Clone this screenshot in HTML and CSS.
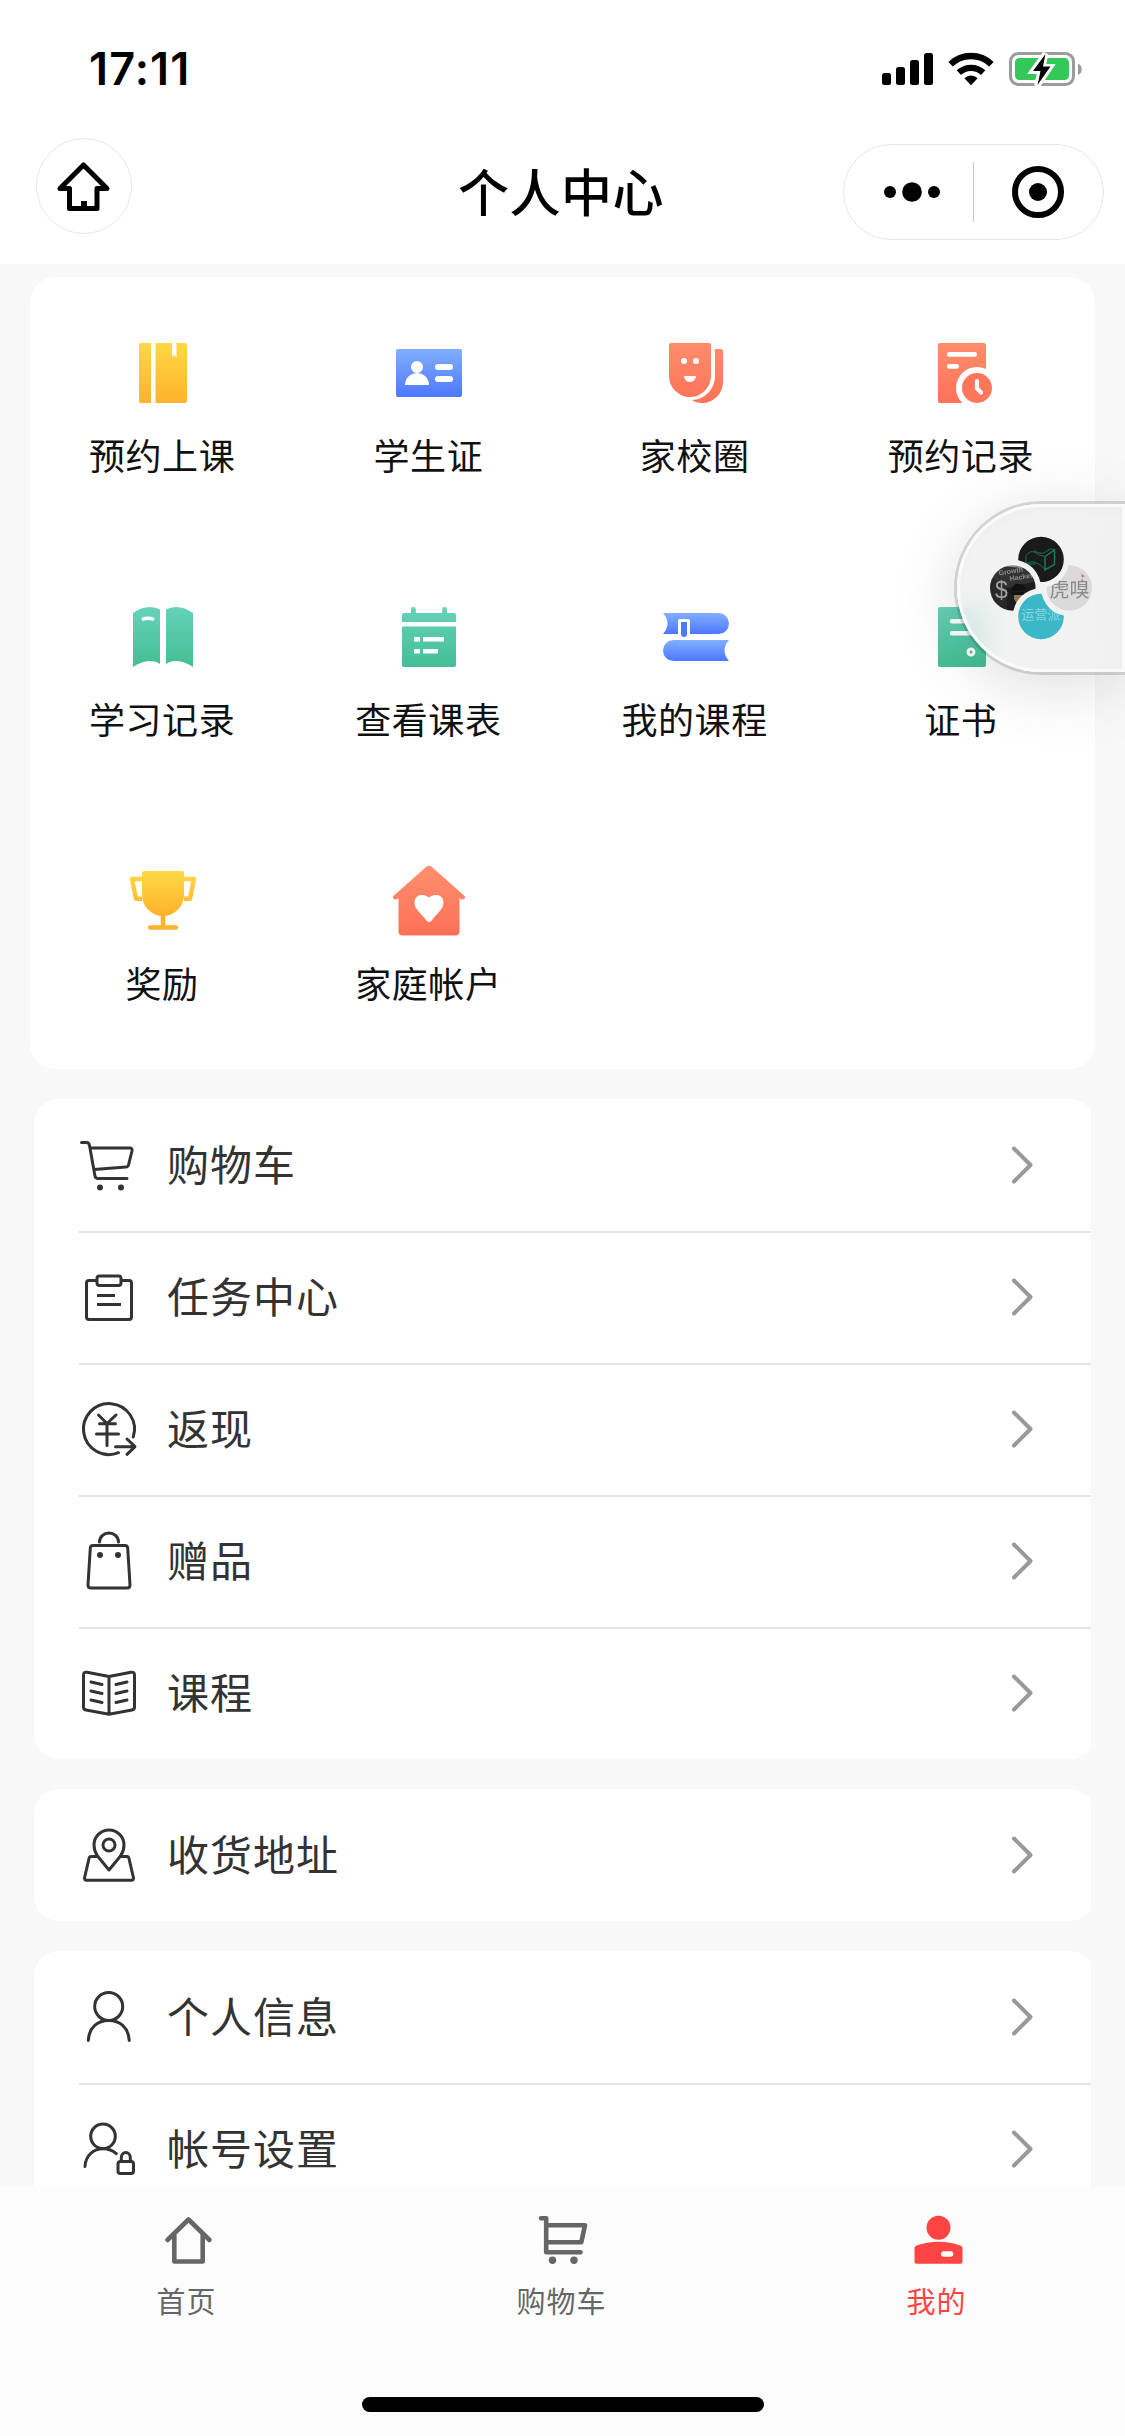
FILE: index.html
```html
<!DOCTYPE html>
<html lang="zh-CN">
<head>
<meta charset="utf-8">
<title>个人中心</title>
<link rel="stylesheet" href="styles.css">
</head>
<body>
<svg class="defs" width="0" height="0" aria-hidden="true">
  <defs>
    <linearGradient id="yellow" gradientUnits="userSpaceOnUse" x1="0" y1="-30" x2="0" y2="30"><stop offset="0" stop-color="#ffd844"/><stop offset="1" stop-color="#ffb22c"/></linearGradient>
    <linearGradient id="cup" gradientUnits="userSpaceOnUse" x1="0" y1="-30" x2="0" y2="15"><stop offset="0" stop-color="#ffd844"/><stop offset="1" stop-color="#ffb22c"/></linearGradient>
    <linearGradient id="blue" gradientUnits="userSpaceOnUse" x1="0" y1="-24" x2="0" y2="24"><stop offset="0" stop-color="#82afff"/><stop offset="1" stop-color="#4c78ff"/></linearGradient>
    <linearGradient id="blueTop" gradientUnits="userSpaceOnUse" x1="0" y1="-24" x2="0" y2="-3"><stop offset="0" stop-color="#82afff"/><stop offset="1" stop-color="#4c78ff"/></linearGradient>
    <linearGradient id="blueBottom" gradientUnits="userSpaceOnUse" x1="0" y1="3" x2="0" y2="24"><stop offset="0" stop-color="#82afff"/><stop offset="1" stop-color="#4c78ff"/></linearGradient>
    <linearGradient id="coral" gradientUnits="userSpaceOnUse" x1="0" y1="-30" x2="0" y2="30"><stop offset="0" stop-color="#ff8d6c"/><stop offset="1" stop-color="#ff7259"/></linearGradient>
    <linearGradient id="green" gradientUnits="userSpaceOnUse" x1="0" y1="-30" x2="0" y2="30"><stop offset="0" stop-color="#66d2b8"/><stop offset="1" stop-color="#43be95"/></linearGradient>
    <symbol id="chevron" viewBox="0 0 24 40"><path d="M4 3.5 20.5 20 4 36.5" fill="none" stroke="#999" stroke-width="4" stroke-linecap="round" stroke-linejoin="round"/></symbol>
  </defs>
</svg>

<header class="header">
  <div class="status">
    <span class="time">17:11</span>
    <svg class="status-icons" width="204" height="40" viewBox="880 49 204 40">
      <g><rect x="882" y="73" width="9" height="12" rx="2.5"/><rect x="896" y="67" width="9" height="18" rx="2.5"/><rect x="910" y="60" width="9" height="25" rx="2.5"/><rect x="924" y="53" width="9" height="32" rx="2.5"/></g>
      <g fill="none" stroke="#000" stroke-width="6.4"><path d="M950.6 64.2a29.5 29.5 0 0 1 40.8 0"/><path d="M958.8 72.6a18 18 0 0 1 24.4 0"/></g>
      <path d="M971 85.2l-6.6-7a9.5 9.5 0 0 1 13.2 0z"/>
      <rect x="1010.5" y="53.5" width="63" height="31" rx="8" fill="none" stroke="#9b9b9b" stroke-width="3"/>
      <path d="M1078 63.5a6.3 6.3 0 0 1 0 11.5z" fill="#9b9b9b"/>
      <rect x="1015" y="58" width="54" height="22" rx="4.5" fill="#34c759"/>
      <path d="M1045.5 53.5l-12.5 17.500h7.500l-3.500 15 13-19h-7.500z" stroke="#fff" stroke-width="6"/>
      <path d="M1045.500 54l-12.500 17h7.500l-3 14 13-18.500h-7.500z"/>
    </svg>
  </div>
  <div class="nav">
    <div class="home-btn">
      <svg width="60" height="60" viewBox="54 156 60 60"><path d="M83.500 165 L107 188.500H97V208.500H69.500V188.500H60Z" fill="none" stroke="#000" stroke-width="5" stroke-linejoin="round"/><path d="M81 201h6v7h-6z"/></svg>
    </div>
    <h1 class="title">个人中心</h1>
    <div class="capsule">
      <svg width="56" height="24" viewBox="-28 -12 56 24"><circle cx="-22" r="6"/><circle r="9.800"/><circle cx="22" r="6"/></svg>
      <span class="capsule-line"></span>
      <svg width="56" height="56" viewBox="-28 -28 56 56"><circle r="23" fill="none" stroke="#000" stroke-width="6"/><circle r="9"/></svg>
    </div>
  </div>
</header>

<main class="content">
  <section class="grid">
    <div class="cell">
      <svg class="gi" viewBox="-39 -39 78 78"><g fill="url(#yellow)"><path d="M-12-30V30h-10a2 2 0 0 1-2-2v-56a2 2 0 0 1 2-2z"/><path d="M-7.500-30H9V-15.300L11.300-18 13.500-15.300V-30H22a2 2 0 0 1 2 2v56a2 2 0 0 1-2 2H-7.500z"/></g></svg>
      <span>预约上课</span>
    </div>
    <div class="cell">
      <svg class="gi" viewBox="-39 -39 78 78"><rect x="-33" y="-24" width="66" height="48" rx="2" fill="url(#blue)"/><g fill="#fff"><circle cx="-12" cy="-6" r="6"/><path d="M-24 12a12 12 0 0 1 24 0z"/><rect x="6" y="-9" width="18" height="6" rx="3"/><rect x="6" y="3" width="18" height="6" rx="3"/></g></svg>
      <span>学生证</span>
    </div>
    <div class="cell">
      <svg class="gi" viewBox="-39 -39 78 78"><g fill="url(#coral)"><path d="M-25-30H13a2 2 0 0 1 2 2V3a21 21 0 0 1-42 0v-31a2 2 0 0 1 2-2z"/><path d="M19-24h6a2 2 0 0 1 2 2V9a21 21 0 0 1-21 21q-6 0-10-3A24 24 0 0 0 19 3z"/></g><g fill="#fff"><circle cx="-12" cy="-12" r="3"/><circle cy="-12" r="3"/><path d="M-12 3H0a6 6 0 0 1-12 0z"/></g></svg>
      <span>家校圈</span>
    </div>
    <div class="cell">
      <svg class="gi" viewBox="-39 -39 78 78"><rect x="-24" y="-30" width="48" height="60" rx="2" fill="url(#coral)"/><rect x="-15" y="-21" width="30" height="4.700" rx="2.300" fill="#fff"/><rect x="-15" y="-9" width="12" height="4.700" rx="2.300" fill="#fff"/><circle cx="15" cy="15" r="21" fill="#fff"/><circle cx="15" cy="15" r="15" fill="#ff765b"/><path d="M15 8v7.500l4 4" fill="none" stroke="#fff" stroke-width="4.200" stroke-linecap="round" stroke-linejoin="round"/></svg>
      <span>预约记录</span>
    </div>
    <div class="cell">
      <svg class="gi" viewBox="-39 -39 78 78"><g fill="url(#green)"><path d="M-30-24Q-22-30-13-30-7-30-3-27.500V27Q-7 24-13 24-22 24.500-30 30z"/><path d="M30-24Q22-30 13-30 7-30 3-27.500V27Q7 24 13 24 22 24.500 30 30z"/></g><path d="M-21-17.500Q-15-20-9-17.500" fill="none" stroke="#fff" stroke-width="3.400"/></svg>
      <span>学习记录</span>
    </div>
    <div class="cell">
      <svg class="gi" viewBox="-39 -39 78 78"><g fill="url(#green)"><path d="M-27-15v-7a2 2 0 0 1 2-2h7v-3.500a2.400 2.400 0 0 1 4.800 0v3.500h26.400v-3.500a2.400 2.400 0 0 1 4.800 0v3.500h7a2 2 0 0 1 2 2v7z"/><path d="M-27-10.500h54V28a2 2 0 0 1-2 2h-50a2 2 0 0 1-2-2z"/></g><path d="M-15 2.200h6m3 0h21M-15 14.200h6m3 0H9" stroke="#fff" stroke-width="4.500"/></svg>
      <span>查看课表</span>
    </div>
    <div class="cell">
      <svg class="gi" viewBox="-39 -39 78 78"><path d="M-33-24H22.500a10.500 10.500 0 0 1 0 21H-33q9-10.500 0-21z" fill="url(#blueTop)"/><path d="M33 3H-22.500a10.500 10.500 0 0 0 0 21H33q-9-10.500 0-21z" fill="url(#blueBottom)"/><path d="M-18-3v-13.500a1.500 1.500 0 0 1 1.500-1.500h9a1.500 1.500 0 0 1 1.500 1.500V-3z" fill="#fff"/><path d="M-15-15h6V-3a3 3 0 0 1-6 0z" fill="#4c78ff"/></svg>
      <span>我的课程</span>
    </div>
    <div class="cell">
      <svg class="gi" viewBox="-39 -39 78 78"><rect x="-24" y="-30" width="48" height="60" rx="2" fill="url(#green)"/><g fill="none" stroke="#fff"><path d="M-10-15.800h21M-10-3.800h21" stroke-width="4.500" stroke-linecap="round"/><circle cx="9" cy="15" r="3" stroke-width="3"/></g></svg>
      <span>证书</span>
    </div>
    <div class="cell">
      <svg class="gi" viewBox="-39 -39 78 78"><path d="M-19-30h38a2 2 0 0 1 2 2v22a21 21 0 0 1-42 0v-22a2 2 0 0 1 2-2z" fill="url(#cup)"/><path d="M-21-22H-31L-27-2.200h6M21-22H31L27-2.200h-6" fill="none" stroke="url(#cup)" stroke-width="4.400" stroke-linejoin="round"/><path d="M0 14v12M-12.800 26.500h25.600" stroke="#ffb22c" stroke-width="4.600" stroke-linecap="round"/></svg>
      <span>奖励</span>
    </div>
    <div class="cell">
      <svg class="gi" viewBox="-39 -39 78 78"><path d="M-3-34Q0-36.500 3-34L35-5.500q2 2 .5 3.300t-3.500.4l-1.500-1.200V30.500a4 4 0 0 1-4 4h-53a4 4 0 0 1-4-4V-3l-1.500 1.200q-2 1-3.500-.4t.5-3.300z" fill="url(#coral)"/><path d="M0 21Q-2 21-3 19L-12 8.500C-17 2-14-6-7-6-3-6-2-4 0-4S3-6 7-6C14-6 17 2 12 8.500L3 19Q2 21 0 21z" fill="#fff"/></svg>
      <span>家庭帐户</span>
    </div>
  </section>

  <section class="group"><div class="list">
    <div class="row"><svg class="li" viewBox="-33 -33 66 66"><path d="M-27.500-22.500h5q2.500 0 3 3L-14 11q.5 2.500 3 2.500H18M-18-17H21q2.500 0 2 3L19.500 0q-.5 2-2.500 2L-15 4.500"/><circle class="dot" cx="-9" cy="22.500" r="3"/><circle class="dot" cx="12" cy="22.500" r="3"/></svg><div class="line"><span>购物车</span><svg class="chev"><use href="#chevron"/></svg></div></div>
    <div class="row"><svg class="li" viewBox="-33 -33 66 66"><path d="M-13-16.500h-7a2.500 2.500 0 0 0-2.500 2.500V20a2.500 2.500 0 0 0 2.500 2.500h40a2.500 2.500 0 0 0 2.500-2.500V-14a2.500 2.500 0 0 0-2.500-2.500h-7M-12-1.500H6M-12 7.500h24" stroke-linecap="butt"/><rect x="-12" y="-21" width="24" height="9.500" rx="2.500"/></svg><div class="line"><span>任务中心</span><svg class="chev"><use href="#chevron"/></svg></div></div>
    <div class="row"><svg class="li" viewBox="-33 -33 66 66"><path d="M24.200 8A25.500 25.500 0 1 0 9.500 23.700M-10.500-14-2-5.500 7-14M-9.500-5.300H6.500M-12.500 5H9.500M-2-5V16.500M6.500 17.700H25.500M18 10l8 7.700-8 7.600"/></svg><div class="line"><span>返现</span><svg class="chev"><use href="#chevron"/></svg></div></div>
    <div class="row"><svg class="li" viewBox="-33 -33 66 66"><path d="M-16-15.500h32q2.500 0 2.700 2.500L21 24q0 3-3 3h-36q-3 0-3-3L-18.700-13q.2-2.500 2.700-2.500zM-9.500-19a9.500 9 0 0 1 19 0"/><circle class="dot" cx="-9" cy="-6" r="3"/><circle class="dot" cx="9" cy="-6" r="3"/></svg><div class="line"><span>赠品</span><svg class="chev"><use href="#chevron"/></svg></div></div>
    <div class="row"><svg class="li" viewBox="-33 -33 66 66"><path d="M0-16.500-22-20.800q-3.500-.5-3.500 2.800V14q0 2.500 2.500 3L0 21.200 23 17q2.500-.5 2.500-3V-18q0-3.300-3.500-2.800zV21M-18-11-7-8.500M-18-2-7 .5M-18 7-7 9.500M18-11 7-8.500M18-2 7 .5M18 7 7 9.500"/></svg><div class="line"><span>课程</span><svg class="chev"><use href="#chevron"/></svg></div></div>
  </div></section>

  <section class="group"><div class="list">
    <div class="row"><svg class="li" viewBox="-33 -33 66 66"><path d="M0 15-11.500 1Q-15-4-15-10A15 15 0 0 1 15-10Q15-4 11.500 1ZM-11 1.500h-7q-1.500 0-2 2L-24.500 23q0 2 1.500 2.200h46q1.500-.2 1.500-2.200L20 3.500q-.5-2-2-2h-7"/><circle cy="-10" r="6"/></svg><div class="line"><span>收货地址</span><svg class="chev"><use href="#chevron"/></svg></div></div>
  </div></section>

  <section class="group"><div class="list">
    <div class="row"><svg class="li" viewBox="-33 -33 66 66"><ellipse cx="-.3" cy="-10.500" rx="14" ry="14"/><path d="M-20.700 23.500C-20 10-11 3.500-.3 3.500S19.500 10 20.200 23.500"/></svg><div class="line"><span>个人信息</span><svg class="chev"><use href="#chevron"/></svg></div></div>
    <div class="row"><svg class="li" viewBox="-33 -33 66 66"><circle cx="-6" cy="-12.700" r="12.300"/><path d="M-24 17.500C-23.500 6-15-.2-6-.2Q2-.2 7.300 4.700"/><rect x="9" y="12.500" width="15.500" height="12" rx="2.500"/><path d="M12.300 12V8.500a4.500 5 0 0 1 9 0V12"/></svg><div class="line"><span>帐号设置</span><svg class="chev"><use href="#chevron"/></svg></div></div>
  </div></section>
</main>

<footer class="tabs">
  <div class="tab-row">
    <div class="tab"><svg width="60" height="60" viewBox="-30 -30 60 60" fill="none" stroke="#666" stroke-width="4.600" stroke-linecap="round" stroke-linejoin="round"><path d="M-20.500-1 .5-21.500 21.500-1M-13.700-6V20.500H14.700V-6"/></svg><span>首页</span></div>
    <div class="tab"><svg width="60" height="60" viewBox="-30 -30 60 60" fill="none" stroke="#666" stroke-width="4.600" stroke-linecap="round" stroke-linejoin="round"><path d="M-22-22.700h5.200V11.200H17.500M-16-15.700H22L18.300 1.300H-16"/><g fill="#666" stroke="none"><circle cx="-10.500" cy="19.300" r="3.700"/><circle cx="11" cy="19.300" r="3.700"/></g></svg><span>购物车</span></div>
    <div class="tab active"><svg width="60" height="60" viewBox="-30 -30 60 60" fill="#f44"><circle cx=".5" cy="-13.300" r="12"/><path d="M-23.500 7q0-1.500 1.500-2.200Q-11 .8 .5 .8T23 4.800q1.500.7 1.500 2.200V20.700a2 2 0 0 1-2 2h-44a2 2 0 0 1-2-2z"/><rect x="3" y="10.300" width="12.300" height="5.500" rx="2.700" fill="#fff"/></svg><span>我的</span></div>
  </div>
  <div class="indicator"></div>
</footer>

<aside class="float">
  <svg width="168" height="168" viewBox="957 504 168 168">
    <defs>
      <mask id="mTop"><circle cx="1041" cy="559.500" r="22.800" fill="#fff"/><circle cx="1012.800" cy="588" r="28.200"/></mask>
      <mask id="mLeft"><circle cx="1012.800" cy="588" r="22.800" fill="#fff"/><circle cx="1041" cy="616.500" r="28.200"/></mask>
      <mask id="mBottom"><circle cx="1041" cy="616.500" r="22.800" fill="#fff"/><circle cx="1069.300" cy="588" r="28.200"/></mask>
      <mask id="mRight"><circle cx="1069.300" cy="588" r="22.800" fill="#fff"/><circle cx="1041" cy="559.500" r="28.200"/></mask>
    </defs>
    <g mask="url(#mTop)"><rect x="1018" y="536" width="46" height="46" fill="#1a1a1a"/><g fill="none" stroke="#147a60"><path d="M1045 556.500l9.500-6.500v14.500l-9.500 5.500z" stroke-width="1.500"/><path d="M1026 555.500q5-6 9-3t10 4M1034 550.500q8 5 12 1t8.500-2M1026 555.500v8.500l2-1.500q8-3 17 7M1028 564h8" stroke-width=".9"/></g></g>
    <g mask="url(#mLeft)"><rect x="989" y="564" width="48" height="48" fill="#8b8b8b"/><path d="M990 578l12-12 30 3 6 15v28h-30l-18-14z" fill="#333"/><path d="M990 576l17 12v24l-17-10z" fill="#292929"/><path d="M1007 588l30-7v32h-30z" fill="#1d1d1d"/><text x="995" y="598" class="dollar">$</text><g transform="rotate(-9 1015 574)"><text x="999" y="573" class="book">Growth</text></g><g transform="rotate(-9 1020 580)"><text x="1010" y="579.500" class="book">Hacker</text></g><path d="M1012 589q2-6 7-5l5 1 1 4 3 1-17 1z" fill="#111"/><path d="M1014 592h10l-2 8-5 4-3-5z" fill="#8c7550"/><path d="M1012 592h12v3h-12z" fill="#111"/></g>
    <g mask="url(#mBottom)"><rect x="1018" y="593" width="46" height="47" fill="#3bb8c8"/><text x="1021.500" y="619" class="ops">运营派</text></g>
    <g mask="url(#mRight)"><rect x="1046" y="565" width="47" height="46" fill="#dadada"/><text x="1049.500" y="597" class="tiger">虎嗅</text><path d="M1081 574l4 2-3 2z" fill="#ee6b6b"/></g>
  </svg>
</aside>
</body>
</html>
```
FILE: styles.css
```css
* { box-sizing: border-box; }
body {
  margin: 0;
  width: 1125px;
  height: 2436px;
  overflow: hidden;
  position: relative;
  display: flex;
  flex-direction: column;
  background: #f8f8f8;
  font-family: "Noto Sans CJK SC", sans-serif;
  color: #111;
}
svg { display: block; flex: none; }
.defs { position: absolute; }

/* status bar and navigation */
.header { flex: none; height: 264px; background: #fff; }
.status {
  height: 132px;
  padding: 49px 41px 0 89px;
  display: flex;
  justify-content: space-between;
  align-items: flex-start;
}
.time {
  font: 600 45px/40px Inter, sans-serif;
  color: #000;
  letter-spacing: 1.1px;
}
.nav {
  height: 132px;
  padding: 0 21px 0 36px;
  display: flex;
  align-items: flex-start;
  justify-content: space-between;
}
.home-btn {
  width: 96px;
  height: 96px;
  margin: 6px 147px 0 0;
  border: 1px solid #e6e6e6;
  border-radius: 50%;
  display: flex;
  align-items: center;
  justify-content: center;
}
.title {
  margin: 10px 0 0;
  font-size: 51px;
  font-weight: 500;
  line-height: 96px;
  letter-spacing: .5px;
  color: #000;
}
.capsule {
  width: 261px;
  height: 96px;
  margin-top: 12px;
  padding: 0 35px 0 40px;
  border: 1px solid #e6e6e6;
  border-radius: 48px;
  display: flex;
  align-items: center;
}
.capsule-line { width: 1px; height: 60px; margin: 0 36px 0 33px; background: #c8c8c8; }

/* shortcut grid */
.content {
  flex: 1;
  min-height: 0;
  overflow: hidden;
  padding-top: 13px;
}
.grid {
  margin: 0 30px 30px;
  height: 792px;
  background: #fff;
  border-radius: 25px;
  display: grid;
  grid-template-columns: repeat(4, 1fr);
  grid-template-rows: repeat(3, 264px);
}
.cell {
  padding-top: 57px;
  display: flex;
  flex-direction: column;
  align-items: center;
  font-size: 36px;
  line-height: 54px;
  letter-spacing: .6px;
  white-space: nowrap;
}
.cell span { margin-right: 2px; }
.gi { width: 78px; height: 78px; margin-bottom: 15px; }

/* menu groups */
.group { margin: 0 34px 30px; overflow: hidden; }
.list { margin-right: -4px; background: #fff; border-radius: 25px; }
.row {
  height: 132px;
  padding-left: 42px;
  display: flex;
  align-items: center;
  background: linear-gradient(#e4e4e4, #e4e4e4) 45px 0 / 100% 2px no-repeat;
}
.row:first-child { background: none; }
.li {
  width: 66px;
  height: 66px;
  fill: none;
  stroke: #333;
  stroke-width: 3;
  stroke-linecap: round;
  stroke-linejoin: round;
}
.dot { fill: #333; stroke: none; }
.line {
  flex: 1;
  padding: 0 61px 0 25px;
  display: flex;
  align-items: center;
  justify-content: space-between;
  font-size: 42px;
  line-height: 60px;
  letter-spacing: 1px;
  color: #333;
}
.line span { padding-bottom: 4px; }
.chev { width: 24px; height: 40px; }

/* bottom tabs */
.tabs {
  flex: none;
  height: 249px;
  background: #fcfcfc;
  display: flex;
  flex-direction: column;
  align-items: center;
  justify-content: space-between;
  padding: 24px 0;
}
.tab-row { width: 100%; display: flex; }
.tab {
  flex: 1;
  display: flex;
  flex-direction: column;
  align-items: center;
  gap: 7px;
  font-size: 29px;
  line-height: 44px;
  letter-spacing: 1px;
  color: #666;
}
.tab span { margin-right: 2px; }
.tab.active { color: #f44; }
.indicator { width: 402px; height: 15px; border-radius: 8px; background: #000; }

/* floating window that overlaps the page edge */
.float {
  position: absolute;
  left: 957px;
  top: 504px;
  width: 168px;
  height: 168px;
  border-radius: 84px 0 0 84px;
  background: rgba(239, 239, 239, .8);
  backdrop-filter: blur(12px);
  box-shadow: inset 0 0 0 3px #fafafa, inset 0 8px 12px rgba(0, 0, 0, .02), 0 0 0 3px rgba(0, 0, 0, .14), 0 12px 70px rgba(0, 0, 0, .14);
}
.dollar { font: 23px "Liberation Sans", sans-serif; fill: #a0a0a0; }
.book { font: bold 7px "Liberation Sans", sans-serif; fill: #8e8e8e; }
.ops { font: 13px "Noto Sans CJK SC", sans-serif; fill: #8ad6e0; }
.tiger { font: 20px "Noto Sans CJK SC", serif; fill: #8b8b8b; }
```
